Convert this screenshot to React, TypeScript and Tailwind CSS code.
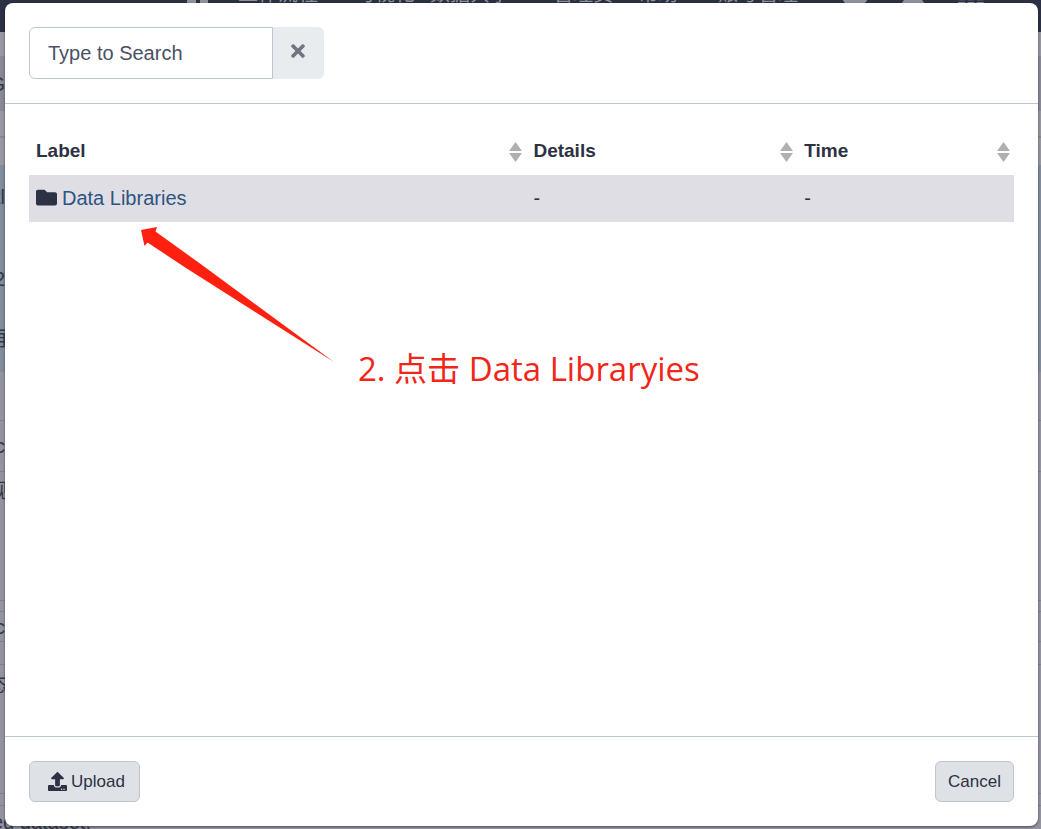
import { useState } from 'react'
import { FaFolder, FaTimes, FaUpload, FaComment, FaBell, FaTh } from 'react-icons/fa'
import clsx from 'clsx'

interface LibraryItem {
  label: string
  details: string
  time: string
}

const items: LibraryItem[] = [{ label: 'Data Libraries', details: '-', time: '-' }]

const columns = [
  { key: 'label', title: 'Label', width: 'w-[50.5%]' },
  { key: 'details', title: 'Details', width: 'w-[27.5%]' },
  { key: 'time', title: 'Time', width: 'w-[22%]' },
]

const historyRows = [
  { text: '', className: 'h-6 bg-[#9798a2]' },
  { text: 'G', className: 'h-[55px] bg-[#888995]' },
  { text: '', className: 'h-[27px] bg-[#9798a2] border-b-2 border-[#878893]' },
  { text: '', className: 'h-[27px] bg-[#9798a2]' },
  { text: 'tl', className: 'h-[89px] bg-[#818d9c] pb-6 border-b border-[#888c97]' },
  { text: '2', className: 'h-[51px] bg-[#818d9c] border-b border-[#888c97]' },
  { text: '再', className: 'h-[67px] bg-[#818d9c]' },
  { text: '', className: 'h-[49px] bg-[#9394a0] border-b border-[#80818d]' },
  { text: 'c', className: 'h-[51px] bg-[#9394a0] border-b border-[#80818d]' },
  { text: '规', className: 'h-[129px] bg-[#9394a0] pb-[90px] border-b border-[#80818d]' },
  { text: '', className: 'h-[11px] bg-[#9394a0] border-b border-[#80818d]' },
  { text: 'c', className: 'h-[30px] bg-[#9394a0] border-b border-[#80818d]' },
  { text: '', className: 'h-[23px] bg-[#9394a0] border-b border-[#80818d]' },
  { text: '态', className: 'h-[129px] bg-[#9394a0] pb-[88px] border-b border-[#80818d]' },
  { text: '', className: 'h-3 bg-[#9394a0] border-b border-[#80818d]' },
]

function SortIcon() {
  return (
    <svg width="13" height="20" viewBox="0 0 13 20" fill="#b0b0b0" aria-hidden="true">
      <path d="M6.5 0L13 9H0zM6.5 20L0 11h13z" />
    </svg>
  )
}

function Masthead() {
  return (
    <nav className="h-8 overflow-hidden bg-[#2c3044] text-[#8f919b]">
      <div className="-mt-4 flex pl-[187px] text-xl leading-5">
        <span className="mr-[30px] flex h-5 gap-1">
          <span className="h-5 w-[9px] bg-current" />
          <span className="h-5 w-2 bg-current" />
        </span>
        <span className="w-[117px] whitespace-nowrap">工作流程</span>
        <span className="w-[75px] whitespace-nowrap">可视化</span>
        <span className="w-[123px] whitespace-nowrap">数据共享</span>
        <span className="w-[85px] whitespace-nowrap">管理员</span>
        <span className="w-20 whitespace-nowrap">帮助</span>
        <span className="w-[124px] whitespace-nowrap">账号管理</span>
        <span className="flex gap-8">
          <FaComment size={26} />
          <FaBell size={26} />
          <FaTh size={26} />
        </span>
      </div>
    </nav>
  )
}

// dimmed page behind the dialog
function Backdrop() {
  return (
    <div aria-hidden="true" className="absolute inset-0 overflow-hidden bg-[#9394a0] text-xl text-[#333849]">
      <Masthead />
      {historyRows.map((row, index) => (
        <div key={index} className={clsx('flex items-center overflow-hidden whitespace-nowrap', row.className)}>
          <span className="-ml-3 w-[17px] text-right">{row.text}</span>
        </div>
      ))}
      <div className="-ml-2 pt-1 leading-6">ed dataset.</div>
    </div>
  )
}

export default function App() {
  const [search, setSearch] = useState('')
  const visible = items.filter(item => item.label.toLowerCase().includes(search.toLowerCase()))

  return (
    <div className="relative min-h-screen font-['Liberation_Sans','Noto_Sans_CJK_SC',sans-serif] text-[#2c3143]">
      <Backdrop />
      <div className="relative flex min-h-screen pt-[3px] pr-[3px] pb-[3px] pl-[5px]">
        <div role="dialog" aria-label="Data Libraries" className="flex flex-1 flex-col rounded-lg bg-white shadow-sm shadow-black/40">
          <header className="border-b border-[#bdc6d0] p-6">
            <div className="flex h-[52px] w-[295px]">
              <input
                type="text"
                aria-label="Search"
                placeholder="Type to Search"
                value={search}
                onChange={e => setSearch(e.target.value)}
                className="min-w-0 flex-1 rounded-l-md border border-[#bdc6d0] px-[18px] text-[20px] outline-none placeholder:text-[#495067]"
              />
              <button
                aria-label="Clear search"
                onClick={() => setSearch('')}
                className="flex w-[51px] items-center justify-center rounded-r-md bg-[#e9ecef] pr-0.5 pb-1 text-[#70757f]"
              >
                <FaTimes size={20} />
              </button>
            </div>
          </header>

          <main className="relative flex-1 p-6">
            <table className="w-full table-fixed text-left">
              <thead>
                <tr>
                  {columns.map(column => (
                    <th key={column.key} className={clsx('h-[47px] pr-1 pl-[7px] text-[19px]', column.width)}>
                      <span className="flex items-center justify-between">
                        {column.title}
                        <SortIcon />
                      </span>
                    </th>
                  ))}
                </tr>
              </thead>
              <tbody>
                {visible.map(item => (
                  <tr key={item.label} className="h-[47px] bg-[#dfdee4] text-[20px]">
                    <td className="pb-0.5 pl-[7px]">
                      <span className="flex items-center gap-[5px]">
                        <FaFolder size={21} />
                        <a href="#" className="text-[#2c5480]">{item.label}</a>
                      </span>
                    </td>
                    <td className="pb-0.5 pl-[7px]">{item.details}</td>
                    <td className="pb-0.5 pl-[7px]">{item.time}</td>
                  </tr>
                ))}
              </tbody>
            </table>

            <svg className="absolute top-[122px] left-[135px]" width="196" height="138" viewBox="0 0 196 138" fill="#ff2010" aria-hidden="true">
              <path d="M1 4L17 1L15.5 5.5L62 39L194 136L46 42L7.5 16.5L4.5 20z" />
            </svg>
            <p className="absolute top-[241px] left-[353px] font-['Open_Sans','Noto_Sans_CJK_SC',sans-serif] text-[33px] leading-12 whitespace-nowrap text-[#f12618]">
              2. 点击 Data Libraryies
            </p>
          </main>

          <footer className="flex justify-between border-t border-[#bdc6d0] p-6">
            <button className="flex h-[41px] items-center gap-1 rounded-md border border-[#bdc6d0] bg-[#dee2e6] pr-3.5 pl-[18px] text-[17px]">
              <FaUpload size={19} />
              Upload
            </button>
            <button className="h-[41px] rounded-md border border-[#bdc6d0] bg-[#dee2e6] px-3 text-[17px]">
              Cancel
            </button>
          </footer>
        </div>
      </div>
    </div>
  )
}
